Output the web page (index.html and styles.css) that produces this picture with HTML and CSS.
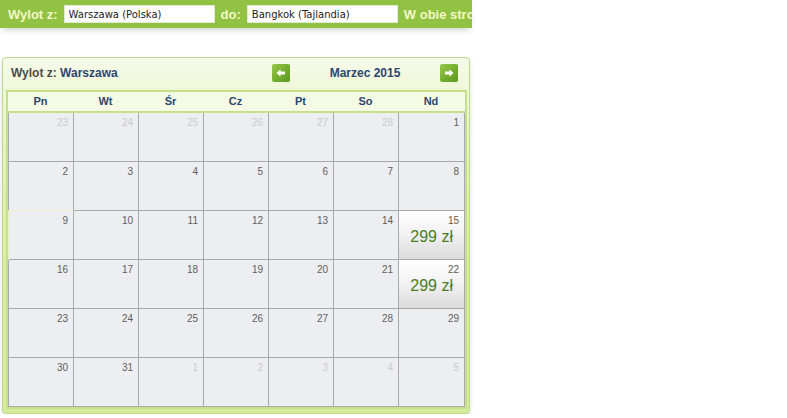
FILE: index.html
```html
<!DOCTYPE html>
<html lang="pl">
<head>
    <meta charset="UTF-8">
    <meta name="viewport" content="width=device-width, initial-scale=1.0">
    <title>Kalendarz cen</title>
    <link rel="stylesheet" href="styles.css">
</head>
<body>

<div class="search-bar">
    <span class="bar-label">Wylot z:</span>
    <input class="bar-input" type="text" value="Warszawa (Polska)">
    <span class="bar-label bar-to">do:</span>
    <input class="bar-input" type="text" value="Bangkok (Tajlandia)">
    <span class="bar-label bar-trip">W obie strony</span>
</div>

<div class="cal-panel">
    <div class="cal-head">
        <div class="cal-from">Wylot z: <b>Warszawa</b></div>
        <div class="cal-nav">
            <button class="nav-btn" type="button">
                <svg width="18" height="18" viewBox="0 0 18 18"><path d="M4.5 9 L8.5 5.2 V7.6 H13 V10.4 H8.5 V12.8 Z" fill="#fff"/></svg>
            </button>
            <span class="cal-month">Marzec 2015</span>
            <button class="nav-btn" type="button">
                <svg width="18" height="18" viewBox="0 0 18 18"><path d="M13.5 9 L9.5 5.2 V7.6 H5 V10.4 H9.5 V12.8 Z" fill="#fff"/></svg>
            </button>
        </div>
    </div>

    <div class="cal-box">
        <div class="cal-days">
            <div>Pn</div><div>Wt</div><div>Śr</div><div>Cz</div><div>Pt</div><div>So</div><div>Nd</div>
        </div>
        <div class="cal-grid">
            <div class="day other"><span>23</span></div>
            <div class="day other"><span>24</span></div>
            <div class="day other"><span>25</span></div>
            <div class="day other"><span>26</span></div>
            <div class="day other"><span>27</span></div>
            <div class="day other"><span>28</span></div>
            <div class="day"><span>1</span></div>

            <div class="day"><span>2</span></div>
            <div class="day"><span>3</span></div>
            <div class="day"><span>4</span></div>
            <div class="day"><span>5</span></div>
            <div class="day"><span>6</span></div>
            <div class="day"><span>7</span></div>
            <div class="day"><span>8</span></div>

            <div class="day today"><span>9</span></div>
            <div class="day"><span>10</span></div>
            <div class="day"><span>11</span></div>
            <div class="day"><span>12</span></div>
            <div class="day"><span>13</span></div>
            <div class="day"><span>14</span></div>
            <div class="day priced"><span>15</span><div class="price">299 zł</div></div>

            <div class="day"><span>16</span></div>
            <div class="day"><span>17</span></div>
            <div class="day"><span>18</span></div>
            <div class="day"><span>19</span></div>
            <div class="day"><span>20</span></div>
            <div class="day"><span>21</span></div>
            <div class="day priced"><span>22</span><div class="price">299 zł</div></div>

            <div class="day"><span>23</span></div>
            <div class="day"><span>24</span></div>
            <div class="day"><span>25</span></div>
            <div class="day"><span>26</span></div>
            <div class="day"><span>27</span></div>
            <div class="day"><span>28</span></div>
            <div class="day"><span>29</span></div>

            <div class="day"><span>30</span></div>
            <div class="day"><span>31</span></div>
            <div class="day other"><span>1</span></div>
            <div class="day other"><span>2</span></div>
            <div class="day other"><span>3</span></div>
            <div class="day other"><span>4</span></div>
            <div class="day other"><span>5</span></div>
        </div>
    </div>
</div>

</body>
</html>
```

FILE: styles.css
```css
body {
    margin: 0;
    padding: 0;
    background: #fff;
    font-family: "Liberation Sans", Arial, sans-serif;
}

/* green search strip */
.search-bar {
    display: flex;
    align-items: center;
    width: 472px;
    height: 28px;
    padding-left: 8px;
    box-sizing: border-box;
    overflow: hidden;
    white-space: nowrap;
    background: #92c244;
    box-shadow: 0 4px 6px -2px rgba(0,0,0,0.18);
}
.bar-label {
    color: #f2f7c4;
    font-size: 13px;
    font-weight: bold;
    flex-shrink: 0;
}
.bar-to {
    margin-left: 6px;
}
.bar-trip {
    margin-left: 7px;
}
.bar-input {
    width: 151px;
    height: 18px;
    margin: 0 0 0 6px;
    padding: 0 0 0 4px;
    box-sizing: border-box;
    border: 1px solid #e2e8d6;
    background: #fff;
    font-family: "DejaVu Sans", Verdana, sans-serif;
    font-size: 10px;
    color: #222;
    flex-shrink: 0;
}
.bar-input + .bar-label {
    margin-left: 6px;
}

/* calendar panel */
.cal-panel {
    width: 468px;
    margin: 29px 0 0 2px;
    padding: 0 2px 4px 3px;
    box-sizing: border-box;
    border: 1px solid #bcd98c;
    border-radius: 4px;
    background: linear-gradient(#f6faea 0, #eef6d2 12%, #dcefa7 45%, #d4eb99 100%);
    box-shadow: 0 3px 4px rgba(0,0,0,0.14);
}
.cal-head {
    display: flex;
    align-items: center;
    justify-content: space-between;
    height: 32px;
    padding: 0 9px 0 5px;
}
.cal-from {
    font-size: 12px;
    font-weight: bold;
    color: #4d4d4d;
    margin-top: -2px;
}
.cal-from b {
    color: #2d4670;
}
.cal-nav {
    display: flex;
    align-items: center;
    justify-content: space-between;
    width: 186px;
    margin-top: -2px;
}
.nav-btn {
    width: 18px;
    height: 18px;
    padding: 0;
    border: 0;
    border-radius: 2px;
    background: linear-gradient(135deg, #98ca4c 0, #73ad2e 55%, #5a9821 100%);
    display: block;
}
.nav-btn svg {
    display: block;
}
.cal-month {
    font-size: 12px;
    font-weight: bold;
    color: #2d4670;
}

.cal-box {
    border: 2px solid #c4e08a;
    background: #f5fae5;
}
.cal-days,
.cal-grid {
    display: grid;
    grid-template-columns: repeat(6, 65px) 66px;
}
.cal-days {
    height: 21px;
    border-bottom: 2px solid #c4e08a;
    box-sizing: border-box;
}
.cal-days div {
    font-size: 11px;
    font-weight: bold;
    color: #2d4670;
    text-align: center;
    line-height: 19px;
}
.cal-grid {
    border-left: 1px solid #a9a9a9;
}

.day {
    height: 49px;
    box-sizing: border-box;
    border-right: 1px solid #a9a9a9;
    border-bottom: 1px solid #a9a9a9;
    background: #eceef1;
    text-align: right;
    padding: 4px 5px 0 0;
    font-size: 10px;
    color: #5e5e5e;
}
.day.other {
    color: #c9cbcd;
}
.day.today {
    border-top: 1px solid #f5f1cc;
    margin-top: -1px;
    height: 50px;
    box-shadow: -1px 0 0 #e6f2be;
}
.day.priced {
    background: linear-gradient(#ffffff 0, #f3f3f3 45%, #dcdcdc 100%);
}
.price {
    margin-top: 2px;
    padding-right: 6px;
    font-size: 16px;
    color: #4b7d1f;
}
```
